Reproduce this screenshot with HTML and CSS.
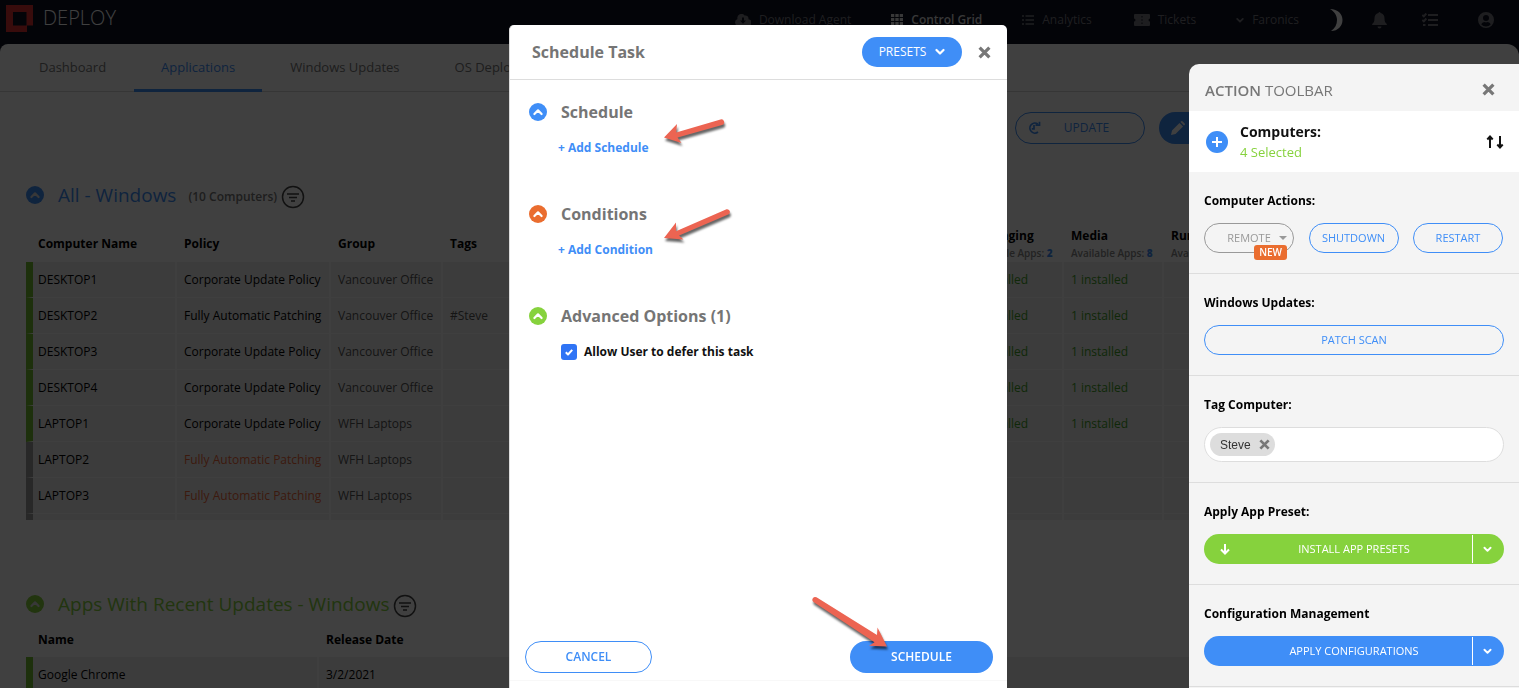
FILE: index.html
```html
<!DOCTYPE html>
<html lang="en">
<head>
<meta charset="utf-8">
<title>Deploy - Applications</title>
<link rel="stylesheet" href="styles.css">
</head>
<body>
<svg class="defs" aria-hidden="true">
  <symbol id="up" viewBox="0 0 18 18"><circle cx="9" cy="9" r="9" fill="currentColor"/><path d="M5.400 11l3.600-3.600 3.600 3.600" fill="none" stroke="var(--chevron, #fff)" stroke-width="2.200" stroke-linecap="round" stroke-linejoin="round"/></symbol>
  <symbol id="down" viewBox="0 0 10 8"><path d="M1.500 2L5 5.500 8.500 2" fill="none" stroke="currentColor" stroke-width="2.200" stroke-linecap="round" stroke-linejoin="round"/></symbol>
  <symbol id="close" viewBox="0 0 12 12"><path d="M1.500 1.500l9 9M10.500 1.500l-9 9" fill="none" stroke="currentColor" stroke-width="3"/></symbol>
  <symbol id="filter" viewBox="0 0 24 24"><circle cx="12" cy="12" r="10.500" fill="none" stroke="currentColor" stroke-width="1.500"/><path d="M6 9h12M8 12.500h8M10 16h4" stroke="currentColor" stroke-width="1.500"/></symbol>
  <symbol id="check" viewBox="0 0 16 16"><path d="M4.800 8.300l2.200 2.200 4.200-4.600" fill="none" stroke="#fff" stroke-width="2" stroke-linejoin="round"/></symbol>
</svg>

<header class="topbar">
  <div class="brand">
    <svg width="27" height="27" viewBox="0 0 27 27"><path fill="#e03030" fill-rule="evenodd" d="M0 0h27v20.500h-6V27H0zM7 7v13.500h13.500V7z"/></svg>
    <span>DEPLOY</span>
  </div>
  <nav class="topnav">
    <a href="#" class="agent"><svg width="16" height="12" viewBox="0 0 16 12"><path fill="currentColor" fill-rule="evenodd" d="M13.400 5.200A3 3 0 0 0 9.600 1.600 4 4 0 0 0 2.500 5 3.600 3.600 0 0 0 3.600 12h9a3.400 3.400 0 0 0 .8-6.800zM7 3.500h2v3h2L8 9.800 5 6.500h2z"/></svg>Download Agent</a>
    <a href="#" class="grid"><svg width="12" height="12" viewBox="0 0 12 12"><path fill="currentColor" d="M0 0h3.300v3H0zM4.300 0h3.400v3H4.300zM8.700 0H12v3H8.700zM0 4h3.300v3H0zM4.300 4h3.400v3H4.300zM8.700 4H12v3H8.700zM0 8h3.300v3H0zM4.300 8h3.400v3H4.300zM8.700 8H12v3H8.700z"/></svg>Control Grid</a>
    <a href="#" class="analytics"><svg width="12" height="10" viewBox="0 0 12 10"><path stroke="currentColor" stroke-width="1.500" d="M0 1h2M0 5h2M0 9h2M3.500 1H12M3.500 5H12M3.500 9H12"/></svg>Analytics</a>
    <a href="#" class="tickets"><svg width="16" height="12" viewBox="0 0 16 12"><path fill="currentColor" fill-rule="evenodd" d="M1 0h14a1 1 0 0 1 1 1v3.500a1.500 1.500 0 0 0 0 3V11a1 1 0 0 1-1 1H1a1 1 0 0 1-1-1V7.500a1.500 1.500 0 0 0 0-3V1a1 1 0 0 1 1-1zM7.500 2v1.500h1V2zM7.500 5.200v1.600h1V5.200zM7.500 8.500V10h1V8.500z"/></svg>Tickets</a>
    <a href="#" class="site"><svg width="8" height="7"><use href="#down"/></svg>Faronics</a>
    <button class="icon-btn moon" aria-label="Dark mode"><svg width="14" height="22" viewBox="0 0 14 22"><path fill="#fff" d="M1 0C9 0 13.500 5 13.500 11S9 22 2 22C6 19.500 8 15.500 8 11S5.500 2.500 1 0z"/></svg></button>
    <button class="icon-btn bell" aria-label="Notifications"><svg width="15" height="17" viewBox="0 0 15 17"><path fill="currentColor" d="M6.500 1a1 1 0 0 1 2 0c3 .6 4 2.800 4 5.500 0 3 .8 4.300 2.300 5.500v1H.2v-1C1.700 10.800 2.500 9.500 2.500 6.500 2.500 3.800 3.500 1.600 6.500 1zM5.500 14.500h4a2 2 0 0 1-4 0z"/></svg></button>
    <button class="icon-btn tasks" aria-label="Tasks"><svg width="16" height="14" viewBox="0 0 16 14"><path fill="none" stroke="currentColor" stroke-width="2" d="M.3 2l1.500 1.300L4.300.5M.3 7l1.500 1.300L4.300 5.500M6 2h10M6 7h10M6 12h10M1 12h2.500"/></svg></button>
    <button class="icon-btn user" aria-label="Account"><svg width="16" height="16" viewBox="0 0 16 16"><path fill="currentColor" fill-rule="evenodd" d="M8 0a8 8 0 1 1 0 16A8 8 0 0 1 8 0zm0 3a3 3 0 1 0 0 6 3 3 0 0 0 0-6zM3.300 12.500a6.500 6.500 0 0 0 9.400 0C12 10.700 10.300 10 9.500 10c-1 .5-2 .5-3 0-.8 0-2.500.7-3.200 2.500z"/></svg></button>
  </nav>
</header>

<main class="page">
  <nav class="tabs">
    <a href="#">Dashboard</a>
    <a href="#" class="active">Applications</a>
    <a href="#">Windows Updates</a>
    <a href="#">OS Deployment</a>
  </nav>
  <div class="actions">
    <button class="pill outline update"><svg width="14" height="14" viewBox="0 0 14 14"><path fill="none" stroke="currentColor" stroke-width="1.700" d="M10.800 3A5 5 0 1 0 11 11M7 4v3.800H4.800M8.500 4.200H12.500V.8"/></svg><span>UPDATE</span></button>
    <button class="pill solid edit" aria-label="Edit"><svg width="14" height="14" viewBox="0 0 14 14"><path fill="currentColor" d="M0 14l1-4.500L8.500 2 12 5.500 4.500 13zM9.500 1l1-1Q11 0 11.500.3L13.700 2.500Q14 3 14 3.500l-1 1z"/></svg></button>
  </div>

  <section class="block">
    <h2 class="blue"><svg width="18" height="18"><use href="#up"/></svg><span>All - Windows</span><small>(10 Computers)</small><svg class="filter" width="24" height="24"><use href="#filter"/></svg></h2>
    <div class="scroller">
      <table class="data computers">
        <colgroup><col class="c-name"><col class="c-policy"><col class="c-group"><col><col class="c-app"><col class="c-app"><col class="c-app"><col class="c-end"></colgroup>
        <thead><tr><th>Computer Name</th><th>Policy</th><th>Group</th><th>Tags</th><th>Messaging<small>Available Apps: <b>2</b></small></th><th>Media<small>Available Apps: <b>8</b></small></th><th>Runtimes<small>Available Apps: <b>9</b></small></th><th></th></tr></thead>
        <tbody>
          <tr class="on"><td>DESKTOP1</td><td>Corporate Update Policy</td><td>Vancouver Office</td><td></td><td>1 installed</td><td>1 installed</td><td></td><td></td></tr>
          <tr class="on"><td>DESKTOP2</td><td>Fully Automatic Patching</td><td>Vancouver Office</td><td>#Steve</td><td>1 installed</td><td>1 installed</td><td></td><td></td></tr>
          <tr class="on"><td>DESKTOP3</td><td>Corporate Update Policy</td><td>Vancouver Office</td><td></td><td>1 installed</td><td>1 installed</td><td></td><td></td></tr>
          <tr class="on"><td>DESKTOP4</td><td>Corporate Update Policy</td><td>Vancouver Office</td><td></td><td>1 installed</td><td>1 installed</td><td></td><td></td></tr>
          <tr class="on"><td>LAPTOP1</td><td>Corporate Update Policy</td><td>WFH Laptops</td><td></td><td>1 installed</td><td>1 installed</td><td></td><td></td></tr>
          <tr class="off"><td>LAPTOP2</td><td>Fully Automatic Patching</td><td>WFH Laptops</td><td></td><td></td><td></td><td></td><td></td></tr>
          <tr class="off"><td>LAPTOP3</td><td>Fully Automatic Patching</td><td>WFH Laptops</td><td></td><td></td><td></td><td></td><td></td></tr>
          <tr class="off"><td></td><td></td><td></td><td></td><td></td><td></td><td></td><td></td></tr>
        </tbody>
      </table>
    </div>
  </section>

  <section class="block">
    <h2 class="green"><svg width="18" height="18"><use href="#up"/></svg><span>Apps With Recent Updates - Windows</span><svg class="filter" width="24" height="24"><use href="#filter"/></svg></h2>
    <table class="data apps">
      <colgroup><col class="c-appname"><col></colgroup>
      <thead><tr><th>Name</th><th>Release Date</th></tr></thead>
      <tbody><tr class="on"><td>Google Chrome</td><td>3/2/2021</td></tr></tbody>
    </table>
  </section>
</main>

<div class="overlay">
  <div class="modal" role="dialog" aria-labelledby="task-title">
    <header class="modal-head">
      <h1 id="task-title">Schedule Task</h1>
      <button class="pill solid presets">PRESETS<svg width="10" height="8"><use href="#down"/></svg></button>
      <button class="x" aria-label="Close"><svg width="13" height="13"><use href="#close"/></svg></button>
    </header>
    <div class="modal-body">
      <section class="group">
        <h3><svg class="i-blue" width="18" height="18"><use href="#up"/></svg>Schedule</h3>
        <a href="#">+ Add Schedule</a>
        <svg class="arrow a1" width="64" height="32" viewBox="0 0 64 32"><path d="M2 19.500L15 6l-.8 8.500L58.500 1.500a2.800 2.800 0 0 1 1.500 5.600L15.500 19.500l4 5.500z"/></svg>
      </section>
      <section class="group">
        <h3><svg class="i-orange" width="18" height="18"><use href="#up"/></svg>Conditions</h3>
        <a href="#">+ Add Condition</a>
        <svg class="arrow a2" width="72" height="40" viewBox="0 0 72 40"><path d="M2 31L14 15.500v8.800L64.500 2.200a2.800 2.800 0 0 1 2.200 5L17 28.500l4.500 4z"/></svg>
      </section>
      <section class="group">
        <h3><svg class="i-green" width="18" height="18"><use href="#up"/></svg>Advanced Options (1)</h3>
        <label class="tick"><input type="checkbox" checked><svg width="16" height="16"><use href="#check"/></svg>Allow User to defer this task</label>
      </section>
    </div>
    <footer class="modal-foot">
      <button class="pill outline cancel">CANCEL</button>
      <button class="pill solid schedule">SCHEDULE</button>
      <svg class="arrow a3" width="80" height="56" viewBox="0 0 80 56"><path d="M77 50.500l-18-.8 5.500-3.500L3.500 6A2.800 2.800 0 0 1 6.500 1.300L67 39l.5-7.500z"/></svg>
    </footer>
  </div>
</div>

<aside class="toolbar">
  <header class="tool-head"><h2><b>ACTION</b> TOOLBAR</h2><button class="x" aria-label="Close toolbar"><svg width="13" height="13"><use href="#close"/></svg></button></header>
  <div class="selection">
    <svg width="22" height="22" viewBox="0 0 22 22"><circle cx="11" cy="11" r="11" fill="#3f8ef7"/><path d="M6 11h10M11 6v10" stroke="#fff" stroke-width="2"/></svg>
    <div><strong>Computers:</strong><span>4 Selected</span></div>
    <button class="sort" aria-label="Sort"><svg width="18" height="14" viewBox="0 0 18 14"><path d="M4 13V2M1.300 4.500L4 1.500l2.700 3M14 1v11M11.300 9.500l2.700 3 2.700-3" fill="none" stroke="#111" stroke-width="2"/></svg></button>
  </div>
  <section class="tool">
    <h3>Computer Actions:</h3>
    <div class="trio">
      <button class="pill outline remote">REMOTE<svg width="8" height="4" viewBox="0 0 8 4"><path fill="currentColor" d="M0 0h8L4 4z"/></svg><span class="new">NEW</span></button>
      <button class="pill outline">SHUTDOWN</button>
      <button class="pill outline">RESTART</button>
    </div>
  </section>
  <section class="tool">
    <h3>Windows Updates:</h3>
    <button class="pill outline wide">PATCH SCAN</button>
  </section>
  <section class="tool">
    <h3><label for="tag">Tag Computer:</label></h3>
    <div class="tagbox"><span class="chip">Steve<button aria-label="Remove Steve"><svg width="11" height="11"><use href="#close"/></svg></button></span><input id="tag" type="text"></div>
  </section>
  <section class="tool">
    <h3>Apply App Preset:</h3>
    <div class="split green-bg"><button class="main"><svg width="12" height="12" viewBox="0 0 12 12"><path d="M6 1v9M2 6.500l4 4 4-4" fill="none" stroke="#fff" stroke-width="2"/></svg>INSTALL APP PRESETS</button><button class="more" aria-label="More presets"><svg width="9" height="7"><use href="#down"/></svg></button></div>
  </section>
  <section class="tool">
    <h3>Configuration Management</h3>
    <div class="split blue-bg"><button class="main">APPLY CONFIGURATIONS</button><button class="more" aria-label="More configurations"><svg width="9" height="7"><use href="#down"/></svg></button></div>
  </section>
</aside>
</body>
</html>
```

FILE: styles.css
```css
:root {
  --blue: #3f8ef7;
  --green: #86d23d;
  --orange: #ea6d2f;
}
* { box-sizing: border-box; }
body {
  margin: 0;
  height: 100vh;
  overflow: hidden;
  background: #0c1022;
  color: #000;
  font: 12px/18px "Open Sans", "Noto Sans", sans-serif;
}
h1, h2, h3 { margin: 0; font-weight: 400; }
a { color: inherit; text-decoration: none; }
button { border: 0; padding: 0; background: none; color: inherit; font: inherit; cursor: pointer; }
svg { flex: none; display: block; }
.defs { position: absolute; width: 0; height: 0; }

/* Top bar */
.topbar { display: flex; justify-content: space-between; height: 44px; padding: 0 25px 0 6px; }
.brand { display: flex; gap: 10px; height: 36px; align-items: center; color: #fff; font-size: 20px; font-weight: 300; }
.topnav { display: flex; align-items: center; height: 40px; color: #7a7a80; }
.topnav a { display: flex; align-items: center; gap: 8px; }
.agent { margin-right: 40px; }
.topnav .grid { margin-right: 40px; color: #ddd; font-weight: 600; }
.analytics { margin-right: 42px; }
.tickets { margin-right: 40px; }
.site { margin-right: 30px; }
.moon { margin-right: 29px; }
.bell { margin-right: 35px; }
.tasks { margin-right: 40px; }

/* Page */
.page { height: calc(100vh - 44px); overflow: hidden; background: #fff; border-radius: 8px 12px 0 0; }
.tabs { display: flex; gap: 1px; height: 48px; padding-left: 12px; border-bottom: 1px solid #d8d8d8; font-size: 13px; color: #777; }
.tabs a { display: flex; align-items: center; height: 46px; padding: 0 27px; }
.tabs .active { height: 48px; border-bottom: 3px solid var(--blue); color: var(--blue); }
.actions { display: flex; justify-content: flex-end; gap: 14px; padding: 20px 230px 0 0; }
.pill { display: flex; align-items: center; justify-content: center; height: 30px; border-radius: 16px; white-space: nowrap; }
.outline { border: 1px solid var(--blue); color: var(--blue); }
.solid { background: var(--blue); color: #fff; }
.update { width: 130px; height: 32px; justify-content: flex-start; padding-left: 11px; }
.update span { flex: 1; padding-right: 12px; }
.edit { width: 130px; height: 32px; justify-content: flex-start; padding-left: 12px; }
.block { padding: 38px 26px 0; }
.block h2 { display: flex; align-items: center; height: 26px; font-size: 19px; --chevron: #ddd; }
.block h2 span { margin-left: 14px; }
.block h2 small { margin: 4px 4px 0 12px; color: #777; font-size: 12px; font-weight: 600; }
.block h2 .filter { margin: 4px 0 0 4px; color: #444; }
.block h2 small + .filter { margin-left: 0; }
.blue { color: var(--blue); }
.green { color: var(--green); }
.scroller { height: 312px; overflow: hidden; }
.data { width: 100%; table-layout: fixed; border-spacing: 0; }
.data th { height: 54px; padding: 0 0 0 7px; text-align: left; font-weight: 700; line-height: 18px; white-space: nowrap; }
.computers th { padding-top: 18px; }
.data th small { display: block; color: #888; font-size: 10px; font-weight: 600; line-height: 16px; }
.data th small b { color: var(--blue); }
.data td { height: 36px; padding: 0 0 0 7px; background: #efefef; border-right: 2px solid #fafafa; border-bottom: 1px solid #fafafa; white-space: nowrap; }
.data th:first-child { padding-left: 12px; }
.data td:first-child { padding-left: 5px; border-left: 7px solid #76bf30; }
.data .off td:first-child { border-left-color: #a0a0a0; }
.c-name { width: 151px; }
.c-policy { width: 154px; }
.c-group { width: 112px; }
.c-app { width: 100px; }
.c-end { width: 229px; }
.c-appname { width: 293px; }
.computers td:nth-child(3), .computers td:nth-child(4) { color: #555; }
.computers td:nth-child(5), .computers td:nth-child(6) { color: #3f9f26; }
.computers .off td:nth-child(2) { color: #f0683a; }
.block + .block { padding-top: 71px; }
.data.apps th { height: 40px; padding-top: 6px; }

/* Schedule task dialog */
.overlay { position: fixed; inset: 0; display: flex; justify-content: center; padding: 25px 3px 0 0; background: rgba(0, 0, 0, .75); }
.modal { display: flex; flex-direction: column; width: 498px; background: #fff; border-left: 1px solid #ddd; border-radius: 5px 5px 0 0; }
.modal-head { display: flex; align-items: center; height: 55px; padding: 0 16px 0 22px; border-bottom: 1px solid #ddd; }
.modal-head h1 { flex: 1; color: #757575; font-size: 16px; font-weight: 700; }
.presets { width: 100px; gap: 9px; margin-right: 16px; font-weight: 500; }
.x { color: #777; }
.modal-body { flex: 1; padding: 20px 19px 0; }
.group { position: relative; height: 102px; }
.group h3 { display: flex; align-items: center; gap: 14px; height: 24px; color: #757575; font-size: 16px; font-weight: 700; }
.group > a { display: block; width: fit-content; margin: 15px 0 0 29px; color: var(--blue); font-weight: 700; }
.i-blue { color: var(--blue); }
.i-orange { color: var(--orange); }
.i-green { color: var(--green); }
.tick { display: flex; align-items: center; gap: 7px; margin: 15px 0 0 32px; color: #111; font-weight: 700; }
.tick input { appearance: none; width: 16px; height: 16px; margin: 0 -23px 0 0; border-radius: 3px; background: #2f74f5; }
.tick svg { position: relative; }
.arrow { position: absolute; overflow: visible; fill: #ec6452; filter: drop-shadow(1px 3px 1px rgba(0, 0, 0, .6)); pointer-events: none; }
.a1 { left: 133px; top: 18px; }
.a2 { left: 133px; top: 5px; }
.a3 { right: 117px; bottom: 28px; }
.modal-foot { position: relative; display: flex; justify-content: space-between; margin-bottom: 7px; padding: 0 14px 7px 15px; border-bottom: 1px solid #f8f8f8; font-weight: 600; }
.cancel { width: 127px; height: 32px; }
.schedule { width: 143px; height: 32px; }

/* Action toolbar */
.toolbar { position: fixed; top: 64px; right: 0; bottom: 0; width: 330px; overflow: hidden; background: #f4f4f4; border-radius: 10px 0 0 0; }
.tool-head { display: flex; align-items: center; justify-content: space-between; height: 47px; padding: 4px 24px 0 16px; }
.tool-head h2 { color: #777; font-size: 15px; }
.tool-head b { font-weight: 600; }
.selection { display: flex; align-items: center; gap: 12px; height: 61px; padding: 0 15px 0 17px; background: #fff; }
.selection div { display: flex; flex: 1; flex-direction: column; line-height: 20px; }
.selection strong { color: #111; font-size: 14px; }
.selection span { color: var(--green); font-size: 13px; }
.tool { height: 102px; padding: 20px 15px 0; border-bottom: 1px solid #ddd; }
.tool:nth-of-type(3) { height: 107px; }
.tool h3 { margin-bottom: 13px; font-size: 12px; font-weight: 700; line-height: 18px; }
.tool .pill { font-size: 11px; }
.trio { display: flex; justify-content: space-between; padding-right: 1px; }
.trio .pill { width: 90px; }
.trio .remote { position: relative; gap: 8px; padding-left: 16px; border-color: #999; color: #999; }
.new { position: absolute; right: 6px; bottom: -8px; padding: 0 5px; border-radius: 3px; background: var(--orange); color: #fff; font-size: 10px; font-weight: 600; line-height: 15px; }
.tool .wide { width: 100%; }
.tagbox { display: flex; align-items: center; height: 35px; padding: 0 5px; border: 1px solid #ddd; border-radius: 18px; background: #fff; }
.chip { display: flex; align-items: center; gap: 8px; height: 23px; padding: 0 5px 0 10px; border-radius: 12px; background: #ddd; color: #333; font: 12px "Liberation Sans", sans-serif; }
.chip button { color: #777; }
.tagbox input { flex: 1; min-width: 0; border: 0; outline: 0; background: none; }
.split { display: flex; height: 30px; border-radius: 15px; color: #fff; font-size: 11px; }
.main { display: flex; flex: 1; align-items: center; justify-content: center; position: relative; padding-left: 32px; }
.main svg { position: absolute; left: 15px; }
.more { display: flex; align-items: center; width: 32px; margin: 1px 0; padding-left: 10px; border-left: 1px solid #fff; }
.green-bg { background: var(--green); }
.blue-bg { background: var(--blue); }
```
